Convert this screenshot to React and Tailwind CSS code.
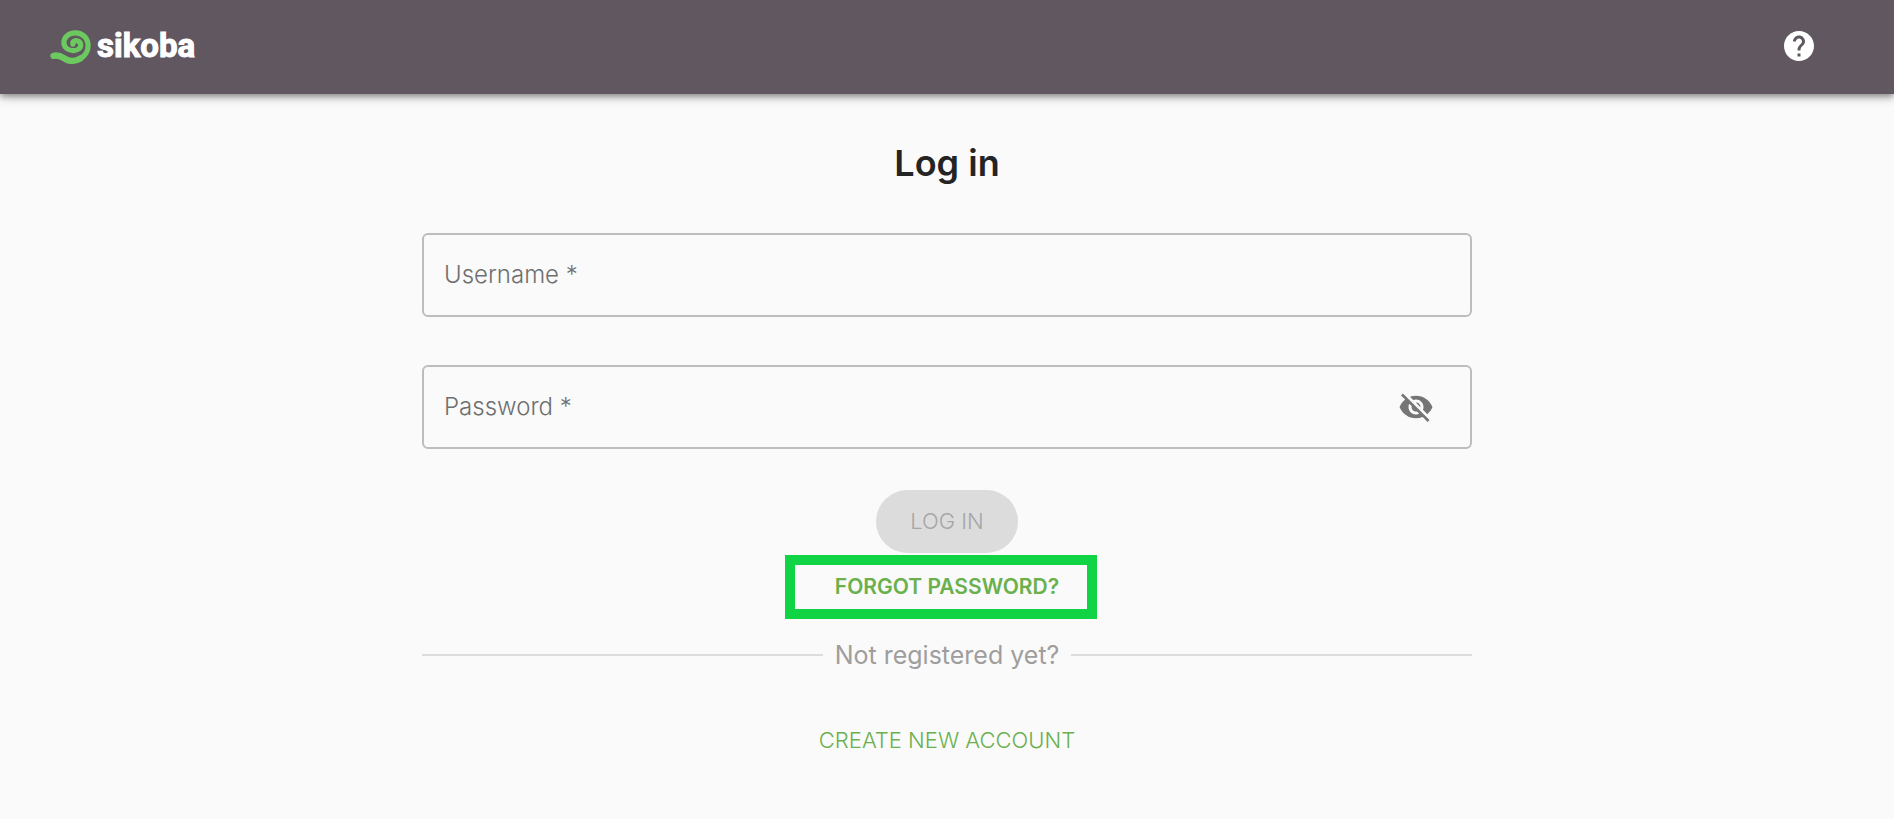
import { useState } from "react";
import { MdHelp, MdVisibility, MdVisibilityOff } from "react-icons/md";

function Logo() {
  return (
    <a href="#" aria-label="sikoba" className="flex items-center gap-1.5">
      <svg viewBox="0 -1 41 36" className="h-9 w-[41px]" fill="none" stroke="#6cc95f" strokeWidth="5.2" strokeLinecap="round">
        <path strokeWidth="6.4" d="M3.500 26.800C10 25.600 12 28.200 16 30.300C20 32.400 26 32.400 30.500 29.400" />
        <path d="M30.500 29.600C35.800 26.200 38.100 22 38.100 17C38.100 9 32.500 3.800 25.400 3.800C18.200 3.800 13.900 8.600 13.900 13.400C13.900 18.400 18.200 21.600 23 21.600C27.600 21.600 30.700 19.200 30.700 15.900C30.700 12.900 28.300 11.500 25.800 11.600C23.600 11.800 22.300 13.300 22.800 15.200" />
      </svg>
      <span className="font-[Roboto,sans-serif] text-[33px] leading-9 font-bold text-white [-webkit-text-stroke:1px_white]">sikoba</span>
    </a>
  );
}

function Field({ id, label, type = "text", children }) {
  return (
    <div className="relative flex h-[84px] items-center rounded-md border-2 border-[#bdbdbd] focus-within:border-[#6ab04c]">
      <input
        id={id}
        type={type}
        required
        placeholder=" "
        className="peer h-full min-w-0 flex-1 bg-transparent px-5 text-2xl text-[#2a2a2a] outline-none"
      />
      <label
        htmlFor={id}
        className="pointer-events-none absolute left-5 text-2xl leading-8 font-light text-[#6f6f6f] peer-focus:invisible peer-[:not(:placeholder-shown)]:invisible"
      >
        {label} *
      </label>
      {children}
    </div>
  );
}

export default function App() {
  const [visible, setVisible] = useState(false);
  return (
    <div className="min-h-screen bg-[#fafafa] font-[Inter,sans-serif]">
      <header className="flex h-[94px] items-center justify-between bg-[#615761] pr-[77px] pb-0.5 pl-[50px] shadow-[0_2px_6px_0_rgba(0,0,0,0.35),0_4px_10px_0_rgba(0,0,0,0.2)]">
        <Logo />
        <button type="button" aria-label="Help" className="text-white">
          <MdHelp className="size-9" />
        </button>
      </header>
      <main className="mx-auto flex max-w-[1050px] flex-col pt-12">
        <h1 className="text-center text-4xl leading-[43px] font-semibold text-[#242424]">Log in</h1>
        <form className="flex flex-col pt-12" onSubmit={(e) => e.preventDefault()}>
          <div className="flex flex-col gap-12">
            <Field id="username" label="Username" />
            <Field id="password" label="Password" type={visible ? "text" : "password"}>
              <button
                type="button"
                aria-label="Toggle password visibility"
                onClick={() => setVisible(!visible)}
                className="mr-9 text-[#757575]"
              >
                {visible ? <MdVisibility className="size-9" /> : <MdVisibilityOff className="size-9" />}
              </button>
            </Field>
          </div>
          <button type="submit" disabled className="mt-[41px] h-[63px] self-center rounded-full bg-[#dcdcdc] px-[34px] text-[22px] font-light text-[#a6a6a6]">
            LOG IN
          </button>
        </form>
        <div className="mt-0.5 mr-3 flex h-16 items-center self-center border-10 border-[#10d444] pr-7 pl-10">
          <a href="#" className="text-[21px] font-semibold text-[#6ab04c]">FORGOT PASSWORD?</a>
        </div>
        <div className="mt-5 flex items-center gap-3">
          <span className="h-0.5 flex-1 bg-[#dcdcdc]" />
          <span className="text-[25px] leading-8 text-[#9e9e9e]">Not registered yet?</span>
          <span className="h-0.5 flex-1 bg-[#dcdcdc]" />
        </div>
        <a href="#" className="mt-[53px] self-center text-[22px] leading-8 font-light text-[#6ab04c]">CREATE NEW ACCOUNT</a>
      </main>
    </div>
  );
}
